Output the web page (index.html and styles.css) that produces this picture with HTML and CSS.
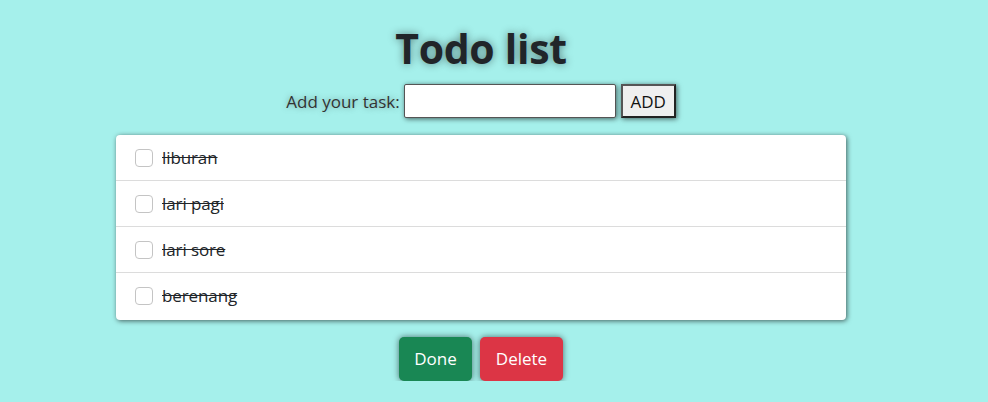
FILE: index.html
```html
<!DOCTYPE html>
<html lang="id">
<head>
<meta charset="utf-8">
<title>Todo list</title>
<link rel="stylesheet" href="styles.css">
</head>
<body>
<div class="app">
  <h1 class="title">Todo list</h1>
  <form class="add-row">
    <label class="add-label" for="task">Add your task:</label>
    <input class="add-input" id="task" type="text">
    <button class="add-btn" type="button">ADD</button>
  </form>
  <ul class="list">
    <li class="item"><span class="check"></span><span class="task">liburan</span></li>
    <li class="item"><span class="check"></span><span class="task">lari pagi</span></li>
    <li class="item"><span class="check"></span><span class="task">lari sore</span></li>
    <li class="item"><span class="check"></span><span class="task">berenang</span></li>
  </ul>
  <div class="actions">
    <button class="btn btn-done" type="button">Done</button>
    <button class="btn btn-delete" type="button">Delete</button>
  </div>
</div>
</body>
</html>
```
FILE: styles.css
```css
html, body {
  margin: 0;
  padding: 0;
}
body {
  background: #a5f0eb;
  font-family: "Open Sans", "Noto Sans", sans-serif;
  color: #212529;
  font-size: 16px;
}
.app {
  width: 730px;
  margin-left: 116px;
  padding-top: 24px;
  display: flex;
  flex-direction: column;
  align-items: center;
}
.title {
  margin: 0;
  font-size: 41px;
  line-height: 48px;
  font-weight: 700;
  color: #212529;
  text-shadow: 0 0 8px rgba(0, 0, 0, 0.45);
  letter-spacing: -0.3px;
}
.add-row {
  margin-top: 12px;
  display: flex;
  align-items: center;
  gap: 4px;
  height: 34px;
}
.add-label {
  font-size: 17px;
  color: #333;
  text-shadow: 0 0 6px rgba(0, 0, 0, 0.35);
}
.add-input {
  box-sizing: border-box;
  width: 212px;
  height: 34px;
  margin: 0;
  border: 1px solid #555;
  border-radius: 2px;
  background: #fff;
  box-shadow: 1px 1px 5px rgba(0, 0, 0, 0.6);
}
.add-btn {
  box-sizing: border-box;
  width: 55px;
  height: 34px;
  margin: 0 0 0 1px;
  border: 2px solid #222;
  border-top-color: #555;
  border-left-color: #555;
  background: #efefef;
  font-family: "Open Sans", "Noto Sans", sans-serif;
  font-size: 17px;
  color: #111;
  padding: 0;
  box-shadow: 1px 1px 5px rgba(0, 0, 0, 0.6);
}
.list {
  list-style: none;
  margin: 17px 0 0;
  padding: 0;
  width: 730px;
  background: #fff;
  border-radius: 4px;
  box-shadow: 1px 1px 5px rgba(0, 0, 0, 0.6);
}
.item {
  display: flex;
  align-items: center;
  padding: 11px 19px 10px;
  line-height: 24px;
  border-bottom: 1px solid #dcdcdc;
}
.item:last-child {
  border-bottom: 0;
  padding-bottom: 12px;
}
.check {
  box-sizing: border-box;
  width: 18px;
  height: 18px;
  border: 1px solid #c4c4c4;
  border-radius: 4px;
  background: #fff;
  margin-right: 9px;
}
.task {
  text-decoration: line-through;
  font-size: 17px;
  color: #212529;
  letter-spacing: -0.1px;
}
.actions {
  margin-top: 17px;
  display: flex;
  gap: 8px;
}
.btn {
  border: 1px solid transparent;
  border-radius: 5px;
  color: #fff;
  font-family: "Open Sans", "Noto Sans", sans-serif;
  font-size: 17px;
  line-height: 26px;
  padding: 8px 0;
  box-shadow: 0 0 6px rgba(0, 0, 0, 0.55);
}
.btn-done {
  background: #198754;
  width: 73px;
}
.btn-delete {
  background: #dc3545;
  width: 83px;
}
```
